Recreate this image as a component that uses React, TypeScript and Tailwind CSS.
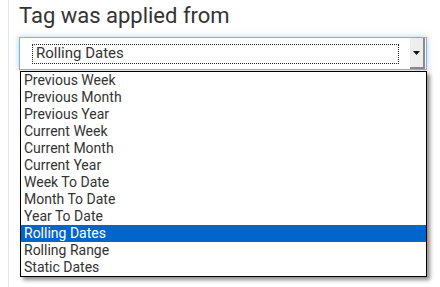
const options = [
  "Previous Week",
  "Previous Month",
  "Previous Year",
  "Current Week",
  "Current Month",
  "Current Year",
  "Week To Date",
  "Month To Date",
  "Year To Date",
  "Rolling Dates",
  "Rolling Range",
  "Static Dates",
];

const selected = "Rolling Dates";

export default function App() {
  return (
    <div className="h-[287px] w-[440px] overflow-hidden bg-white font-['Roboto',sans-serif] text-[#333]">
      <div className="ml-[8px] h-full border-l border-[#e6e6e6] pl-[10px] pt-[5px]">
        <h2 className="text-[22px] leading-[22px] font-normal">Tag was applied from</h2>

        <div className="relative mt-[10px] w-[408px]">
          {/* closed select, focused */}
          <div className="flex h-[33px] items-center border border-[#7ab2e2] bg-white pl-[12px] pr-[1px] shadow-[0_0_6px_rgba(102,175,233,0.55)]">
            <div className="flex h-[20px] w-[367px] items-center border border-dotted border-[#222] pl-[3px] text-[15px] leading-none">
              {selected}
            </div>
            <div className="ml-auto flex h-full w-[15px] items-center justify-center border-r-2 border-b-2 border-[#8a8a8a] bg-[#ededed]">
              <svg width="7" height="4" viewBox="0 0 7 4">
                <path d="M0 0h7L3.5 4z" fill="#111" />
              </svg>
            </div>
          </div>

          {/* open list */}
          <ul className="absolute left-[1px] top-[34px] w-[407px] border border-black bg-white shadow-[3px_3px_4px_rgba(0,0,0,0.45)]">
            {options.map((o) => (
              <li
                key={o}
                className={`h-[17px] pl-[3px] text-[14px] leading-[17px] ${
                  o === selected ? "bg-[#0066cc] text-white" : "text-[#333]"
                }`}
              >
                {o}
              </li>
            ))}
          </ul>
        </div>
      </div>
    </div>
  );
}
